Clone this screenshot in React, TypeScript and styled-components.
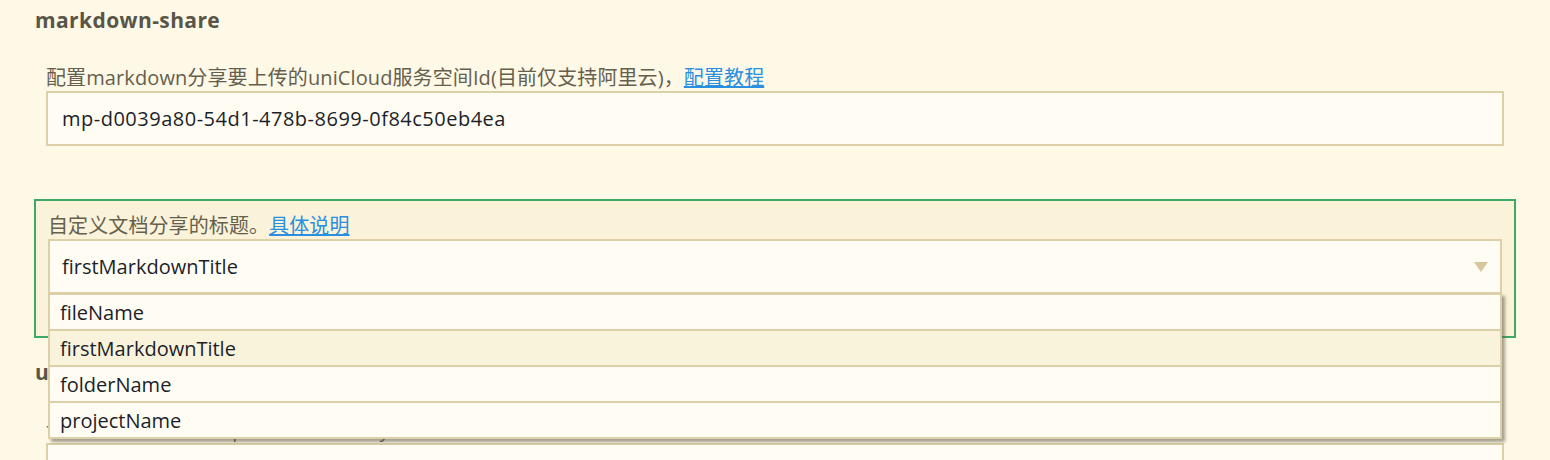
import React from 'react';
import styled, { createGlobalStyle } from 'styled-components';

const GlobalStyle = createGlobalStyle`
  html, body {
    margin: 0;
    padding: 0;
    background: #fef8e7;
  }
  body {
    font-family: "Open Sans", "Noto Sans CJK SC", sans-serif;
    overflow: hidden;
  }
`;

const Page = styled.div`
  padding: 5px 34px 0 34px;
  height: 460px;
  box-sizing: border-box;
  overflow: hidden;
`;

const Section = styled.section`
  display: flex;
  flex-direction: column;

  & + & {
    margin-top: 10px;
  }
`;

const Heading = styled.h2`
  margin: 0 0 18px 1px;
  font-size: 21px;
  line-height: 30px;
  font-weight: 700;
  letter-spacing: 0.4px;
  color: #595548;
`;

const Item = styled.div<{ $focused?: boolean }>`
  position: relative;
  display: flex;
  flex-direction: column;
  padding: ${({ $focused }) => ($focused ? '12px 12px 42px' : '12px 12px 44px')};
  margin-bottom: 9px;
  border: ${({ $focused }) => ($focused ? '2px solid #3ea866' : 'none')};
  background: ${({ $focused }) => ($focused ? '#faf3da' : 'transparent')};
`;

const Label = styled.div`
  font-size: 20px;
  line-height: 26px;
  color: #65604d;
  white-space: nowrap;
  letter-spacing: 0.1px;
`;

const Link = styled.a`
  color: #2a8fe0;
  text-decoration: underline;
  cursor: pointer;
`;

const Field = styled.div`
  display: flex;
  align-items: center;
  height: 55px;
  box-sizing: border-box;
  padding: 0 14px;
  border: 2px solid #ddd0a8;
  background: #fffcf3;
  font-size: 20px;
  letter-spacing: 0.5px;
  color: #1c1f2a;
`;

const SelectField = styled(Field)`
  justify-content: space-between;
  padding: 0 12px;
  letter-spacing: 0;
`;

const Arrow = styled.span`
  width: 0;
  height: 0;
  border-left: 7px solid transparent;
  border-right: 7px solid transparent;
  border-top: 10px solid #d6c89c;
`;

const SelectWrap = styled.div`
  position: relative;
`;

const Menu = styled.ul`
  position: absolute;
  left: 0;
  right: 0;
  top: 100%;
  margin: -1px 0 0;
  padding: 0;
  list-style: none;
  z-index: 5;
  border: 2px solid #ddd0a8;
  border-top: none;
  box-shadow: 3px 3px 3px rgba(90, 85, 70, 0.55);
  background: #fffcf3;
`;

const Option = styled.li<{ $active?: boolean }>`
  height: 36px;
  box-sizing: border-box;
  display: flex;
  align-items: center;
  padding: 0 10px;
  border-top: 2px solid #ddd0a8;
  background: ${({ $active }) => ($active ? '#faf3dc' : '#fffcf3')};
  font-size: 20px;
  color: #1c1f2a;
`;

const options = ['fileName', 'firstMarkdownTitle', 'folderName', 'projectName'];

export default function App() {
  return (
    <>
      <GlobalStyle />
      <Page>
        <Section>
          <Heading>markdown-share</Heading>
          <Item>
            <Label>
              配置markdown分享要上传的uniCloud服务空间Id(目前仅支持阿里云)，<Link>配置教程</Link>
            </Label>
            <Field>mp-d0039a80-54d1-478b-8699-0f84c50eb4ea</Field>
          </Item>
          <Item $focused>
            <Label>
              自定义文档分享的标题。<Link>具体说明</Link>
            </Label>
            <SelectWrap>
              <SelectField>
                firstMarkdownTitle
                <Arrow />
              </SelectField>
              <Menu>
                {options.map((o) => (
                  <Option key={o} $active={o === 'firstMarkdownTitle'}>
                    {o}
                  </Option>
                ))}
              </Menu>
            </SelectWrap>
          </Item>
        </Section>
        <Section>
          <Heading>uml-preview</Heading>
          <Item>
            <Label>设置使用的渲染引擎 plantUML library</Label>
            <Field />
          </Item>
        </Section>
      </Page>
    </>
  );
}
